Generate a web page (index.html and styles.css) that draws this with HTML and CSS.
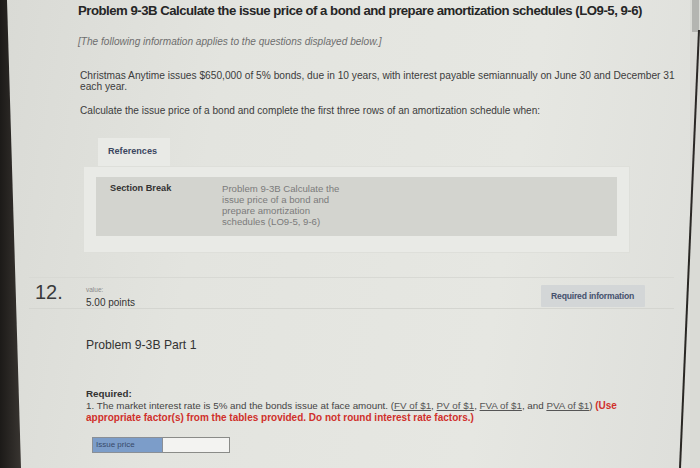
FILE: index.html
```html
<!DOCTYPE html>
<html>
<head>
<meta charset="utf-8">
<link rel="stylesheet" href="styles.css">
</head>
<body>
<div class="screen">
  <div class="bezel"></div>
  <div class="page">
    <h1 class="title">Problem 9-3B Calculate the issue price of a bond and prepare amortization schedules (LO9-5, 9-6)</h1>
    <p class="note">[The following information applies to the questions displayed below.]</p>
    <p class="text">Christmas Anytime issues $650,000 of 5% bonds, due in 10 years, with interest payable semiannually on June 30 and December 31 each year.</p>
    <p class="text calc">Calculate the issue price of a bond and complete the first three rows of an amortization schedule when:</p>

    <div class="refs">
      <div class="tab">References</div>
      <div class="panel">
        <div class="inner">
          <div class="sb">Section Break</div>
          <div class="sbtext">Problem 9-3B Calculate the issue price of a bond and prepare amortization schedules (LO9-5, 9-6)</div>
        </div>
      </div>
    </div>

    <div class="qrow">
      <div class="qnum">12.</div>
      <div class="qval">
        <div class="vlabel">value:</div>
        <div class="points">5.00 points</div>
      </div>
      <div class="reqbtn">Required information</div>
    </div>

    <div class="part">
      <h2 class="parttitle">Problem 9-3B Part 1</h2>
      <div class="required">
        <div class="reqhead">Required:</div>
        <div class="reqtext">1. The market interest rate is 5% and the bonds issue at face amount. (<span class="lnk">FV of $1</span>, <span class="lnk">PV of $1</span>, <span class="lnk">FVA of $1</span>, and <span class="lnk">PVA of $1</span>) <span class="red">(Use</span> <span class="red">appropriate factor(s) from the tables provided. Do not round interest rate factors.)</span></div>
      </div>
      <div class="answer">
        <div class="alabel">Issue price</div>
        <div class="ainput"></div>
      </div>
    </div>
  </div>
  <div class="scroll"><div class="thumb"></div></div>
</div>
</body>
</html>
```
FILE: styles.css
```css
html, body {
  margin: 0;
  padding: 0;
}
body {
  width: 700px;
  height: 468px;
  overflow: hidden;
  background: linear-gradient(100deg, #d9dad5 0%, #e3e4df 30%, #e6e7e2 70%, #dddeda 100%);
  font-family: "Liberation Sans", Arial, sans-serif;
  color: #444;
}
.screen {
  position: relative;
  display: flex;
  height: 468px;
}
.screen::after {
  content: "";
  position: absolute;
  left: 0;
  top: 0;
  width: 700px;
  height: 468px;
  background: #2a2825;
  clip-path: polygon(698px 30px, 700px 30px, 681px 468px, 679px 468px);
}
.bezel {
  flex: none;
  width: 22px;
  height: 468px;
  background: linear-gradient(to right, #1c1a18, #3a3632);
  clip-path: polygon(0 0, 7px 0, 21px 100%, 0 100%);
}
.page {
  flex: 1;
  min-width: 0;
}
.scroll {
  flex: none;
  width: 10px;
  background: #dadbd6;
}
.thumb {
  height: 32px;
  background: #b4b5b1;
  margin: 0 1px 0 2px;
}
.title {
  margin: 2px 0 0 56px;
  font-size: 13.2px;
  font-weight: bold;
  letter-spacing: -0.5px;
  color: #262626;
  line-height: 17px;
  white-space: nowrap;
}
.note {
  margin: 17px 0 0 56px;
  font-size: 10.1px;
  font-style: italic;
  color: #6e6e6e;
  line-height: 12px;
}
.text {
  margin: 22px 0 0 58px;
  width: 600px;
  font-size: 10.2px;
  line-height: 11px;
  color: #3c3c3c;
}
.calc {
  margin-top: 13px;
  font-size: 10.1px;
}
.refs {
  margin: 22px 0 0 61px;
  width: 547px;
}
.tab {
  margin-left: 15px;
  width: 72px;
  height: 28px;
  box-sizing: border-box;
  padding: 8px 0 0 10px;
  background: #e9eae6;
  font-size: 9.1px;
  font-weight: bold;
  color: #3b4660;
}
.panel {
  background: #e9eae6;
  border: 1px solid #dedfda;
  padding: 10px 12px 16px 12px;
}
.inner {
  display: flex;
  background: #d3d4cf;
  padding: 6px 0 9px 14px;
}
.sb {
  width: 112px;
  font-size: 9.2px;
  font-weight: bold;
  color: #333;
}
.sbtext {
  width: 124px;
  font-size: 9.6px;
  line-height: 11px;
  color: #7b7b7b;
}
.qrow {
  display: flex;
  align-items: flex-start;
  margin: 24px 0 0 7px;
  padding-left: 6px;
  width: 645px;
  height: 32px;
  box-sizing: border-box;
  border-top: 1px solid #d8d9d4;
  border-bottom: 1px solid #d4d5d0;
}
.qnum {
  width: 51px;
  padding-top: 2px;
  font-size: 20px;
  line-height: 24px;
  color: #3a3a3a;
}
.qval {
  flex: 1;
  padding-top: 8px;
}
.vlabel {
  font-size: 6.5px;
  color: #8a8a8a;
  line-height: 8px;
}
.points {
  font-size: 10px;
  line-height: 11px;
  color: #333;
  margin-top: 3px;
}
.reqbtn {
  margin: 7px 29px 0 0;
  height: 22px;
  box-sizing: border-box;
  padding: 6px 11px 0 10px;
  background: #d3d6d7;
  font-size: 8.6px;
  font-weight: bold;
  color: #44506d;
  letter-spacing: -0.2px;
  border-radius: 1px;
}
.part {
  margin-left: 64px;
}
.parttitle {
  margin: 29px 0 0 0;
  font-size: 12.2px;
  font-weight: normal;
  color: #333;
  line-height: 14px;
}
.required {
  margin-top: 36px;
  width: 560px;
  font-size: 9.8px;
  line-height: 12px;
  color: #444;
}
.reqhead {
  font-weight: bold;
  color: #333;
}
.lnk {
  color: #555;
  text-decoration: underline;
}
.red {
  color: #d0302b;
  font-weight: bold;
  font-size: 10px;
}
.answer {
  display: flex;
  margin: 13px 0 0 6px;
}
.alabel {
  width: 71px;
  height: 16px;
  box-sizing: border-box;
  padding: 2px 0 0 3px;
  background: #7c9dc9;
  border: 1px solid #8a8f96;
  font-size: 8px;
  color: #384a6a;
}
.ainput {
  width: 67px;
  height: 16px;
  box-sizing: border-box;
  background: #f3f3f1;
  border: 1px solid #8a8b88;
  border-left: none;
}
```
